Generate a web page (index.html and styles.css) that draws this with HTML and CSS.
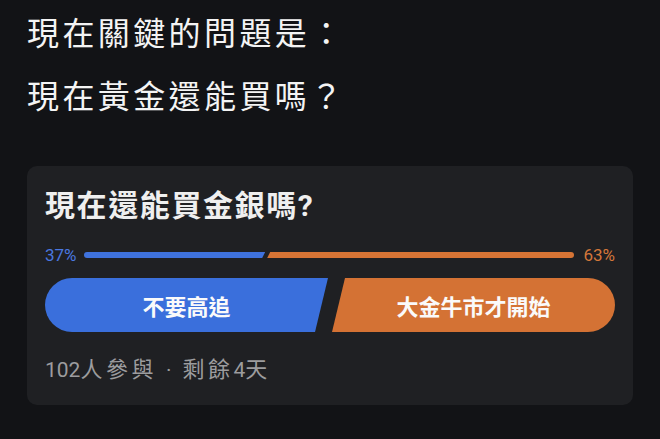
FILE: index.html
```html
<!DOCTYPE html>
<html>

<head>
    <title>現在還能買金銀嗎?</title>
    <link rel="stylesheet" href="styles.css">
</head>

<body>

    <div class="page">
        <div class="headline">
            <p>現在關鍵的問題是：</p>
            <p>現在黃金還能買嗎？</p>
        </div>

        <div class="poll">
            <h2 class="poll-title">現在還能買金銀嗎?</h2>

            <div class="result">
                <span class="pct pct-a">37%</span>
                <div class="bar">
                    <div class="bar-a" style="width: 37%"></div>
                    <div class="bar-b"></div>
                </div>
                <span class="pct pct-b">63%</span>
            </div>

            <div class="options">
                <div class="option option-a">不要高追</div>
                <div class="option option-b">大金牛市才開始</div>
            </div>

            <div class="meta">102<span class="wide">人參與</span><span class="dot">·</span><span class="wide">剩餘</span>4<span class="wide">天</span></div>
        </div>
    </div>

</body>

</html>
```

FILE: styles.css
```css
body {
    margin: 0;
    background-color: #121316;
    color: #f2f2f2;
    font-family: Roboto, "Noto Sans CJK TC", sans-serif;
}

.page {
    padding: 3px 27px 0 27px;
}

.headline p {
    margin: 0;
    font-size: 32px;
    line-height: 63px;
    letter-spacing: 3.4px;
    color: #f4f4f4;
}

.poll {
    margin-top: 37px;
    background-color: #1f2023;
    border-radius: 10px;
    padding: 20px 18px 21px 18px;
}

.poll-title {
    margin: 0;
    font-size: 30px;
    line-height: 40px;
    font-weight: 700;
    letter-spacing: 1.6px;
    color: #efefef;
}

.result {
    display: flex;
    align-items: center;
    height: 20px;
    margin-top: 19px;
}

.pct {
    font-size: 17px;
    font-weight: 400;
}

.pct-a {
    color: #4a78e0;
    margin-right: 7px;
}

.pct-b {
    color: #d4773a;
    margin-left: 9px;
}

.bar {
    flex: 1;
    display: flex;
    gap: 2px;
    height: 6px;
}

.bar-a {
    background-color: #3f72dd;
    border-radius: 3px 0 0 3px;
    clip-path: polygon(0 0, 100% 0, calc(100% - 3px) 100%, 0 100%);
}

.bar-b {
    flex: 1;
    background-color: #d67435;
    border-radius: 0 3px 3px 0;
    clip-path: polygon(3px 0, 100% 0, 100% 100%, 0 100%);
}

.options {
    display: flex;
    gap: 4px;
    margin-top: 13px;
}

.option {
    flex: 1;
    height: 54px;
    display: flex;
    align-items: center;
    justify-content: center;
    font-size: 22px;
    font-weight: 700;
    color: #fafafa;
}

.option-a {
    background-color: #3a6fdc;
    border-radius: 27px 0 0 27px;
    clip-path: polygon(0 0, 100% 0, calc(100% - 13px) 100%, 0 100%);
}

.option-b {
    background-color: #d47234;
    border-radius: 0 27px 27px 0;
    clip-path: polygon(13px 0, 100% 0, 100% 100%, 0 100%);
}

.meta {
    margin-top: 24px;
    font-size: 21px;
    line-height: 28px;
    color: #9c9c9e;
}

/* CJK runs in the footer sit wider than the digits */
.meta .wide {
    font-size: 22px;
    letter-spacing: 3.5px;
}

.dot {
    margin: 0 11px 0 9px;
}
```
